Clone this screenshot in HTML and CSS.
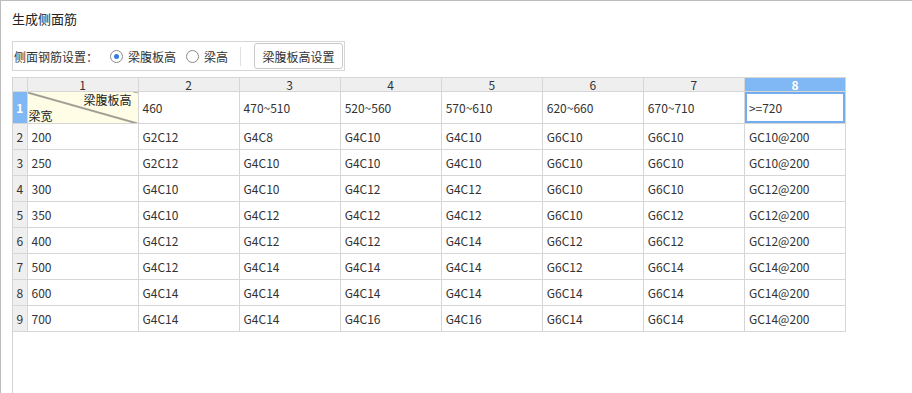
FILE: index.html
```html
<!DOCTYPE html>
<html lang="zh">

<head>
    <meta charset="UTF-8">
    <title>生成侧面筋</title>
    <link rel="stylesheet" href="styles.css">
</head>

<body>
    <div class="pg">
        <div class="ttl">生成侧面筋</div>
        <div class="tb">
            <span class="lbl">侧面钢筋设置：</span>
            <label class="rd on"><i></i>梁腹板高</label>
            <label class="rd"><i></i>梁高</label>
            <span class="sep"></span>
            <button class="btn">梁腹板高设置</button>
        </div>
        <div class="gw">
            <table class="gd" id="gd">
                <colgroup>
                    <col class="c0">
                    <col class="c1">
                    <col><col><col><col><col><col><col>
                </colgroup>
                <thead>
                    <tr>
                        <th class="rh"></th>
                        <th>1</th><th>2</th><th>3</th><th>4</th><th>5</th><th>6</th><th>7</th><th class="sel">8</th>
                    </tr>
                </thead>
                <tbody>
                    <tr class="r1">
                        <td class="rh sel">1</td>
                        <td class="dg"><div class="dgw"><span class="dt">梁腹板高</span><span class="db">梁宽</span></div></td>
                        <td>460</td><td>470~510</td><td>520~560</td><td>570~610</td><td>620~660</td><td>670~710</td>
                        <td class="cur">&gt;=720</td>
                    </tr>
                </tbody>
            </table>
        </div>
    </div>

    <script>
        const rows = [
            ['200', 'G2C12', 'G4C8', 'G4C10', 'G4C10', 'G6C10', 'G6C10', 'GC10@200'],
            ['250', 'G2C12', 'G4C10', 'G4C10', 'G4C10', 'G6C10', 'G6C10', 'GC10@200'],
            ['300', 'G4C10', 'G4C10', 'G4C12', 'G4C12', 'G6C10', 'G6C10', 'GC12@200'],
            ['350', 'G4C10', 'G4C12', 'G4C12', 'G4C12', 'G6C10', 'G6C12', 'GC12@200'],
            ['400', 'G4C12', 'G4C12', 'G4C12', 'G4C14', 'G6C12', 'G6C12', 'GC12@200'],
            ['500', 'G4C12', 'G4C14', 'G4C14', 'G4C14', 'G6C12', 'G6C14', 'GC14@200'],
            ['600', 'G4C14', 'G4C14', 'G4C14', 'G4C14', 'G6C14', 'G6C14', 'GC14@200'],
            ['700', 'G4C14', 'G4C14', 'G4C16', 'G4C16', 'G6C14', 'G6C14', 'GC14@200']
        ];

        const tb = document.querySelector('#gd tbody');
        rows.forEach((r, i) => {
            const tr = document.createElement('tr');
            tr.innerHTML = `<td class="rh">${i + 2}</td>` + r.map(v => `<td>${v}</td>`).join('');
            tb.appendChild(tr);
        });
    </script>
</body>

</html>
```

FILE: styles.css
```css
body {
    margin: 0;
    padding: 0;
    font-family: "Microsoft YaHei", "Noto Sans CJK SC", sans-serif;
    font-size: 12px;
    color: #333;
    background: #fff;
}

.pg {
    height: 100vh;
    box-sizing: border-box;
    border-top: 1px solid #bcbcbc;
    border-left: 1px solid #bcbcbc;
    display: flex;
    flex-direction: column;
    padding-left: 11px;
}

.ttl {
    font-size: 13px;
    line-height: 18px;
    margin-top: 9px;
    color: #222;
}

.tb {
    margin-top: 13px;
    width: 330px;
    height: 28px;
    border: 1px solid #d6d6d6;
    display: flex;
    align-items: center;
    padding-left: 1px;
    white-space: nowrap;
}

.tb > * {
    flex-shrink: 0;
}

.lbl {
    margin-right: 12px;
}

.rd {
    display: flex;
    align-items: center;
    margin-right: 10px;
}

.rd i {
    width: 11px;
    height: 11px;
    border: 1px solid #8a8a8a;
    border-radius: 50%;
    margin-right: 5px;
    position: relative;
    background: #fff;
}

.rd.on i::after {
    content: "";
    position: absolute;
    left: 3px;
    top: 3px;
    width: 5px;
    height: 5px;
    border-radius: 50%;
    background: #2f7ee0;
}

.sep {
    width: 1px;
    height: 19px;
    background: #e0e0e0;
    margin-left: 2px;
    margin-right: 13px;
}

.btn {
    font: inherit;
    color: #333;
    height: 26px;
    width: 89px;
    padding: 0;
    border: 1px solid #c8c8c8;
    border-radius: 3px;
    background: #fff;
}

.gw {
    flex: 1;
    margin-top: 6px;
    border-left: 1px solid #d4d4d4;
}

.gd {
    border-collapse: collapse;
    table-layout: fixed;
    width: 833px;
}

.gd .c0 {
    width: 14px;
}

.gd .c1 {
    width: 111px;
}

.gd th,
.gd td {
    border: 1px solid #d6d6d6;
    padding: 0 0 0 4px;
    height: 25px;
    white-space: nowrap;
    overflow: hidden;
}

.gd tr > :first-child {
    border-left: none;
}

.gd th {
    background: #efefef;
    font-weight: normal;
    height: 13px;
    line-height: 13px;
    padding: 0;
    text-align: center;
    border-top: 1px solid #d6d6d6;
    overflow: visible;
}

.gd .rh {
    background: #efefef;
    padding: 0;
    text-align: center;
}

.gd .sel {
    background: #80b8f5;
    color: #fff;
    font-weight: bold;
}

.gd .r1 td {
    height: 31px;
}

.gd td.dg {
    padding: 0;
    background: #fffde6 linear-gradient(to top right, transparent calc(50% - 1px), #444 50%, transparent calc(50% + 1px));
}

.dgw {
    height: 31px;
    display: flex;
    flex-direction: column;
    justify-content: space-between;
    padding: 0 6px 0 1px;
}

.dt {
    align-self: flex-end;
    line-height: 16px;
    color: #222;
}

.db {
    line-height: 14px;
    color: #222;
}

.gd td.cur {
    position: relative;
    box-shadow: inset 0 0 0 2px #74adef;
}

.gd td.cur::after {
    content: "";
    position: absolute;
    right: -3px;
    bottom: -3px;
    width: 4px;
    height: 4px;
    background: #74adef;
}
```
